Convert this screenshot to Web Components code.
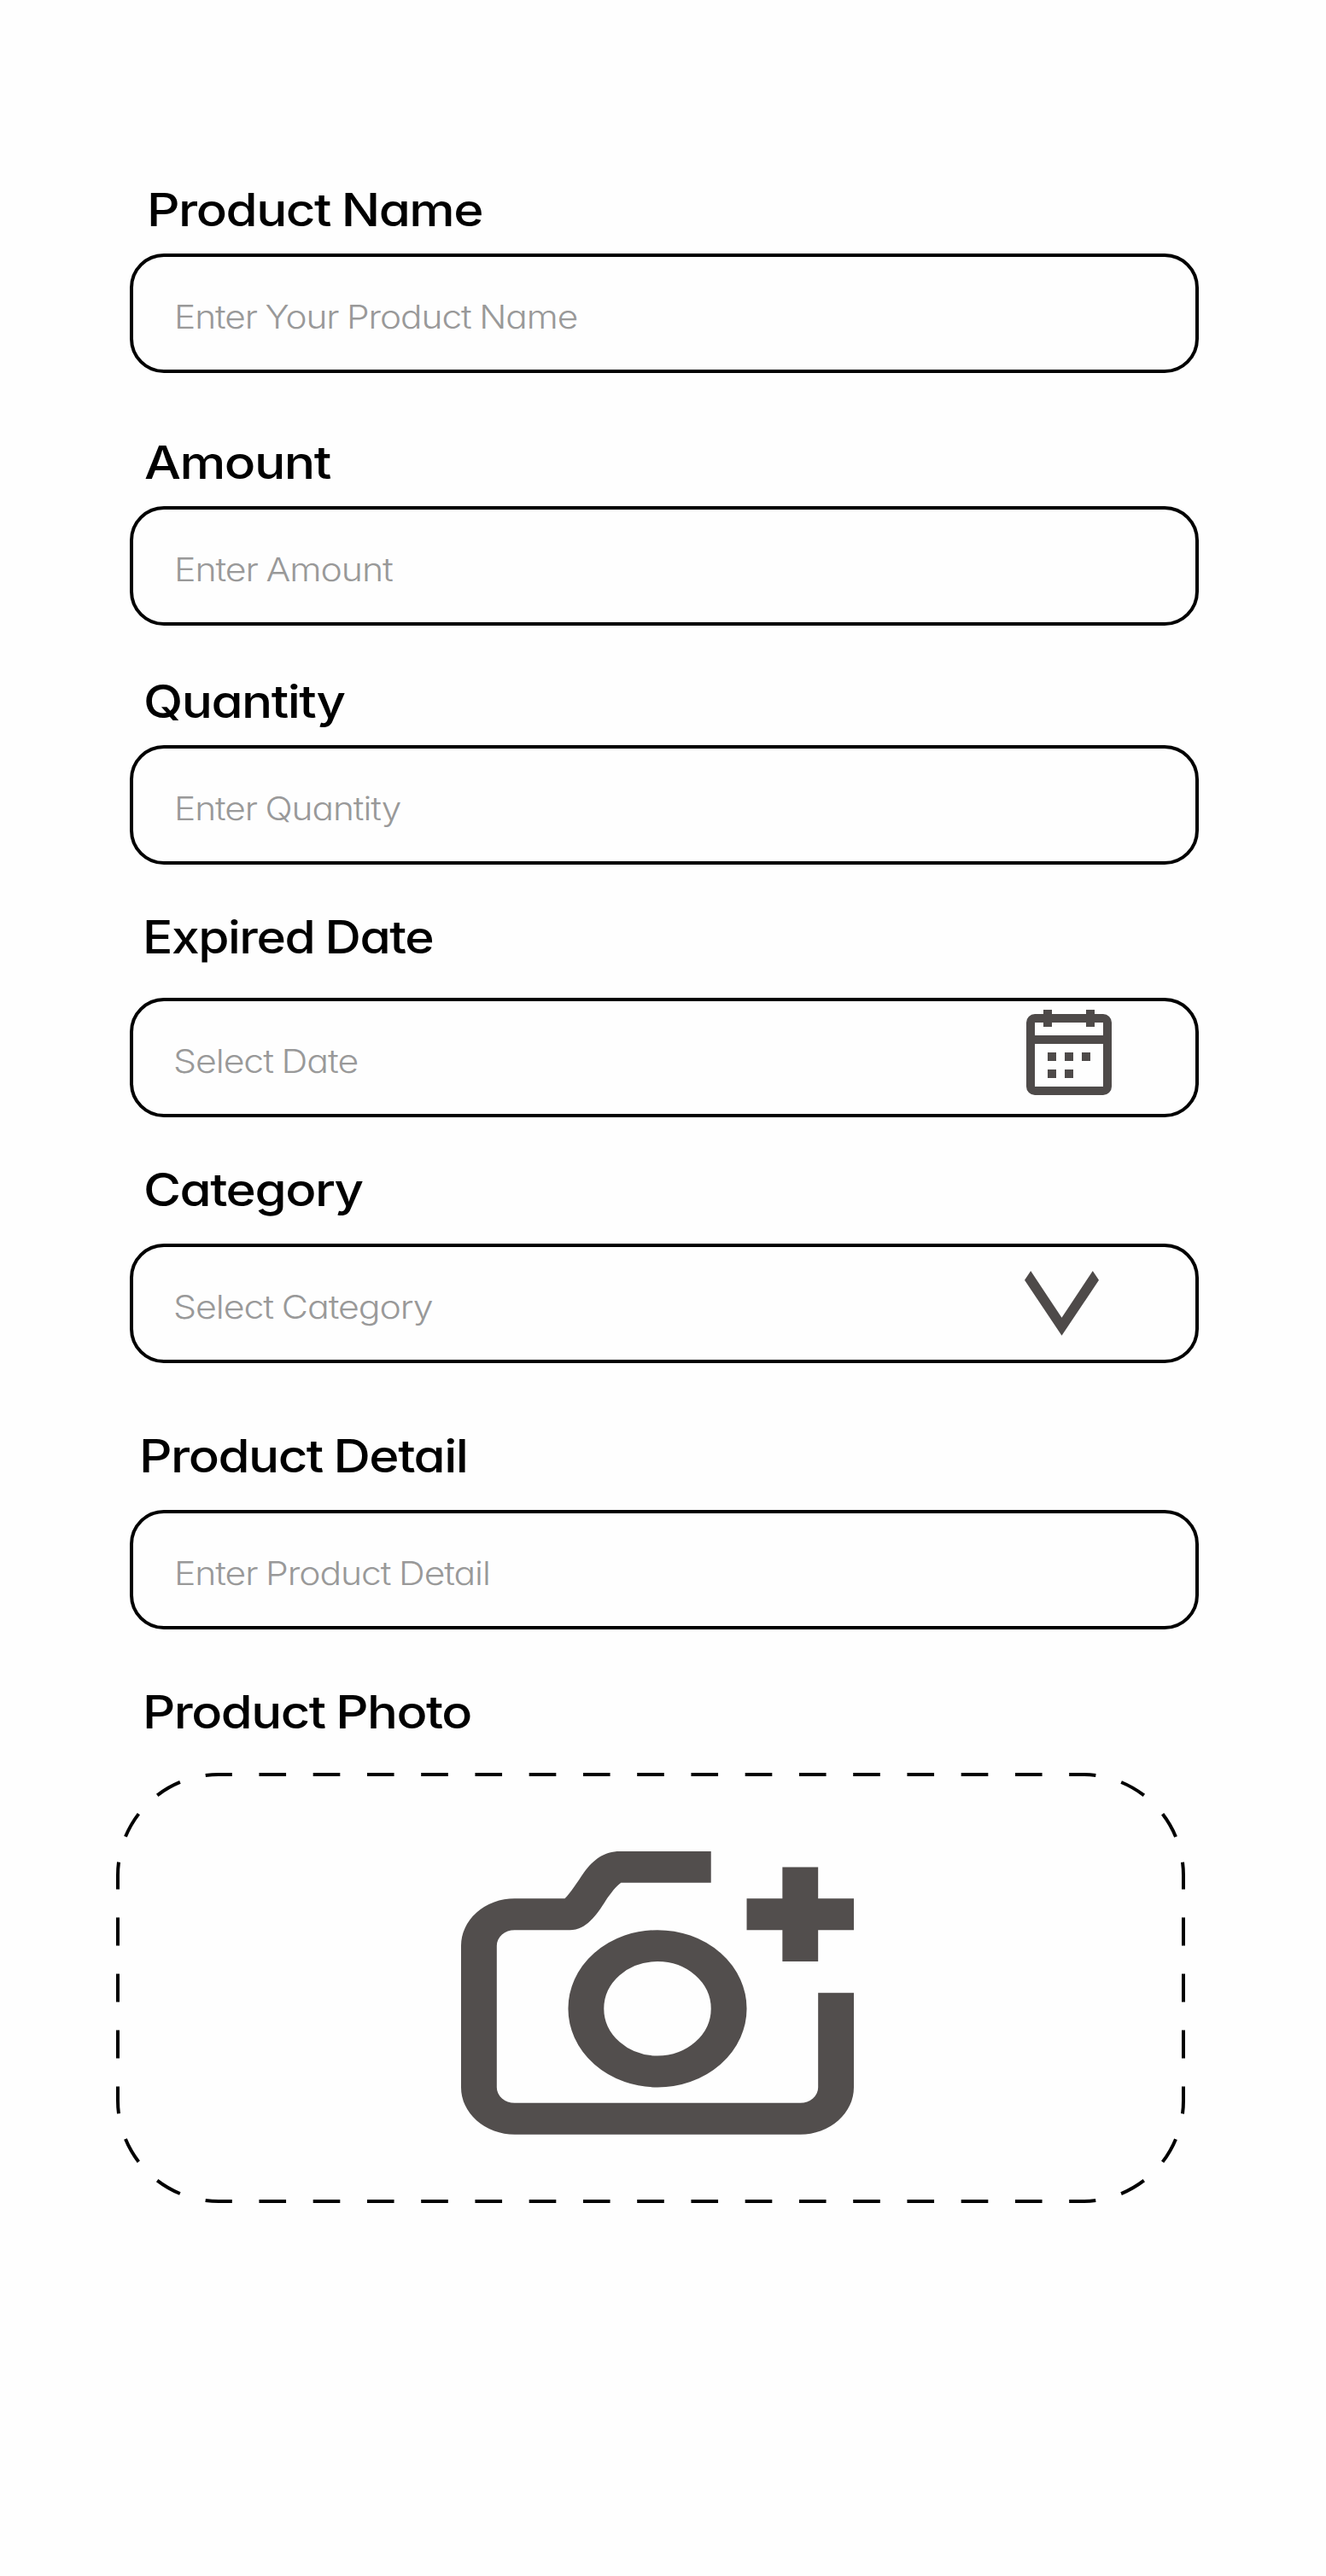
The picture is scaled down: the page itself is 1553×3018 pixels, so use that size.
<!DOCTYPE html>
<html lang="en">
<head>
<meta charset="utf-8">
<title>Product form</title>
<style>
  body { margin: 0; background: #fefefe; color: #000; font-family: Inter, "Open Sans", sans-serif; }
</style>
</head>
<body>
<product-form>
  <form-field style="--gap:21px"><fit-text slot="label" start="24.3" span="388.4">Product Name</fit-text><fit-text slot="value" kind="hint" start="55" span="468.5">Enter Your Product Name</fit-text></form-field>
  <form-field style="--lead:74px;--gap:21px"><fit-text slot="label" start="18.2" span="218">Amount</fit-text><fit-text slot="value" kind="hint" start="55" span="253">Enter Amount</fit-text></form-field>
  <form-field style="--lead:58px;--gap:21px"><fit-text slot="label" start="17.8" span="234">Quantity</fit-text><fit-text slot="value" kind="hint" start="55" span="262.5">Enter Quantity</fit-text></form-field>
  <form-field style="--lead:54px;--gap:41px"><fit-text slot="label" start="19.6" span="335.7">Expired Date</fit-text><fit-text slot="value" kind="hint" start="53.5" span="213.5">Select Date</fit-text><calendar-icon slot="icon"></calendar-icon></form-field>
  <form-field style="--lead:54px;--gap:33px"><fit-text slot="label" start="17.8" span="255">Category</fit-text><fit-text slot="value" kind="hint" start="53.5" span="302">Select Category</fit-text><chevron-icon slot="icon"></chevron-icon></form-field>
  <form-field style="--lead:78px;--gap:33px"><fit-text slot="label" start="15.5" span="377.5">Product Detail</fit-text><fit-text slot="value" kind="hint" start="55" span="364.3">Enter Product Detail</fit-text></form-field>
  <photo-field><fit-text slot="label" start="19.7" span="379.2">Product Photo</fit-text></photo-field>
</product-form>
<script>
const define = (name, markup, setup) => {
  const template = document.createElement('template');
  template.innerHTML = markup;
  customElements.define(name, class extends HTMLElement {
    constructor() {
      super();
      this.attachShadow({ mode: 'open' }).append(template.content.cloneNode(true));
    }
    connectedCallback() { if (setup) setup(this); }
  });
};

define('product-form', `
  <style>
    :host { display: flex; flex-direction: column; box-sizing: border-box; width: 1553px; height: 3018px; padding: 215px 149px 0 152px; }
  </style><slot></slot>`);

/* A single line whose glyphs are widened so that its ink spans a given width. */
const pen = document.createElement('canvas').getContext('2d');
define('fit-text', `
  <style>
    :host { display: flex; white-space: nowrap; font-size: 53.6px; font-weight: 500; line-height: 61px; letter-spacing: -0.025em; word-spacing: -0.03em; font-feature-settings: "cv11"; }
    :host([kind="hint"]) { font-size: 38.5px; font-weight: 320; line-height: 48px; color: #999; }
    span { display: block; transform-origin: 0 50%; }
  </style><span><slot></slot></span>`, el => {
  const css = getComputedStyle(el);
  const line = el.shadowRoot.querySelector('span');
  pen.font = `${css.fontWeight} ${css.fontSize} ${css.fontFamily}`;
  const m = pen.measureText(el.textContent);
  const bearings = m.width - m.actualBoundingBoxRight - m.actualBoundingBoxLeft + parseFloat(css.letterSpacing);
  const scale = el.getAttribute('span') / (line.getBoundingClientRect().width - bearings);
  line.style.transform = `scaleX(${scale.toFixed(4)})`;
  el.style.paddingLeft = Math.max(0, +el.getAttribute('start') + m.actualBoundingBoxLeft * scale).toFixed(2) + 'px';
});

define('form-field', `
  <style>
    :host { display: flex; flex-direction: column; gap: var(--gap); margin-top: var(--lead, 0); }
    .box { display: flex; justify-content: space-between; box-sizing: border-box; height: 140px; border: 4px solid #000; border-radius: 40px; }
    .value { margin: 46px 0 0 -4px; }
  </style>
  <slot name="label"></slot>
  <div class="box"><div class="value"><slot name="value"></slot></div><slot name="icon"></slot></div>`);

define('calendar-icon', `
  <style>:host { display: block; margin: 10px 98px 0 0; } svg { display: block; }</style>
  <svg width="100" height="100" viewBox="0 0 100 100" fill="#4e4a49">
    <path fill-rule="evenodd" d="M10 5H20V0H30V5H70V0H80V5H90A10 10 0 0 1 100 15V90A10 10 0 0 1 90 100H10A10 10 0 0 1 0 90V15A10 10 0 0 1 10 5ZM10 15V30H90V15H80V20H70V15H30V20H20V15ZM10 40V90H90V40Z"/>
    <path d="M25 50h10v10h-10zM45 50h10v10h-10zM65 50h10v10h-10zM25 70h10v10h-10zM45 70h10v10h-10z"/>
  </svg>`);

define('chevron-icon', `
  <style>:host { display: block; margin: 28px 113px 0 0; } svg { display: block; }</style>
  <svg width="87" height="76" viewBox="0 0 87 76" fill="#4e4a49"><path d="M0 10.7L7.2 0L43.5 54.8L79.8 0L87 10.7L43.5 75.8Z"/></svg>`);

define('photo-field', `
  <style>
    :host { display: flex; flex-direction: column; gap: 41px; margin-top: 66px; }
    .zone { display: grid; width: 1252px; height: 504px; margin-left: -16px; }
    .zone > * { grid-area: 1 / 1; display: block; }
    .camera { margin: 92px 0 0 404px; }
  </style>
  <slot name="label"></slot>
  <div class="zone">
    <svg width="1252" height="504" viewBox="0 0 1252 504" fill="none" stroke="#000" stroke-width="4">
      <path d="M120 2H1132M120 502H1132" stroke-dasharray="31.625" stroke-dashoffset="15.8125"/>
      <path d="M2 120V384M1250 120V384" stroke-dasharray="33" stroke-dashoffset="16.5"/>
      <path d="M2 120A118 118 0 0 1 120 2M1132 2A118 118 0 0 1 1250 120M1250 384A118 118 0 0 1 1132 502M120 502A118 118 0 0 1 2 384" stroke-dasharray="30.892" stroke-dashoffset="15.446"/>
    </svg>
    <svg class="camera" width="460" height="331.7" viewBox="1 3 22 18" preserveAspectRatio="none" fill="#524e4d">
      <path d="M15 3H9.9C9 3 8.4 3.55 7.9 4.32C7.5 4.98 7.12 5.68 6.81 6H4A3 3 0 0 0 1 9V18A3 3 0 0 0 4 21H20A3 3 0 0 0 23 18V12H21V18A1 1 0 0 1 20 19H4A1 1 0 0 1 3 18V9A1 1 0 0 1 4 8H7.1C8 8 8.6 7.05 9.1 6.13C9.4 5.65 9.68 5.22 9.96 5H15Z"/>
      <path d="M19 4H21V6H23V8H21V10H19V8H17V6H19Z"/>
      <circle cx="12" cy="13" r="4" fill="none" stroke="#524e4d" stroke-width="2"/>
    </svg>
  </div>`);
</script>
</body>
</html>
